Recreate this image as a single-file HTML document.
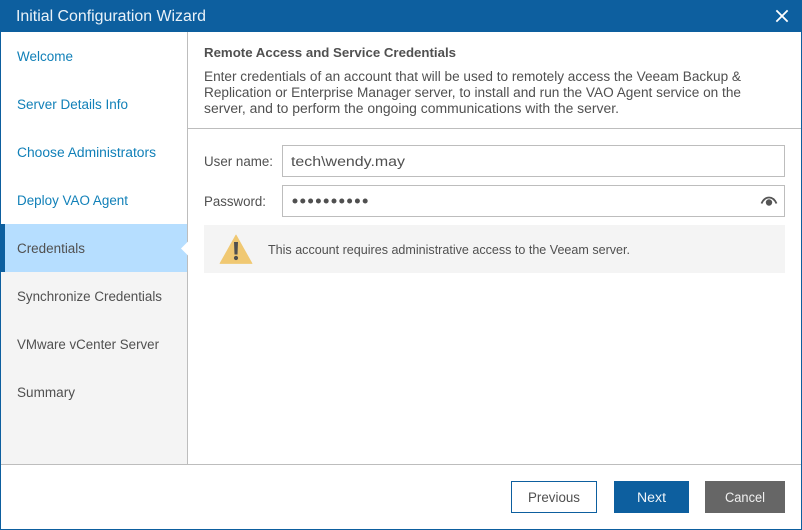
<!DOCTYPE html>
<html><head><meta charset="utf-8"><style>
html,body{margin:0;padding:0;background:#fff}
#p{position:relative;width:802px;height:530px;overflow:hidden;background:#fff;font-family:"Liberation Sans",sans-serif;font-size:13px;color:#505050}
#p div{position:absolute}
svg{position:absolute;left:0;top:0}
text{font-family:"Liberation Sans",sans-serif;font-size:13.5px;fill:#505050}
</style></head><body><div id="p">
<div style="left:0;top:0;width:800px;height:529px;border:1px solid #0d5f9f;border-top:0"></div>
<div style="left:0;top:0;width:802px;height:32px;background:#0d5f9f"></div>
<div style="left:1px;top:272px;width:186px;height:192px;background:#f4f4f4"></div>
<div style="left:1px;top:224px;width:186px;height:48px;background:#b6deff"></div>
<div style="left:1px;top:224px;width:4px;height:48px;background:#0d5f9f"></div>
<div style="left:187px;top:32px;width:1px;height:432px;background:#bdbdbd"></div>
<div style="left:188px;top:128px;width:613px;height:1px;background:#bdbdbd"></div>
<div style="left:1px;top:464px;width:800px;height:1px;background:#bdbdbd"></div>
<div style="left:282px;top:145px;width:501px;height:30px;border:1px solid #bdbdbd"></div>
<div style="left:282px;top:185px;width:501px;height:30px;border:1px solid #bdbdbd"></div>
<div style="left:204px;top:225px;width:581px;height:48px;background:#f4f4f4"></div>
<div style="left:511px;top:481px;width:84px;height:30px;border:1px solid #0d5f9f"></div>
<div style="left:614px;top:481px;width:75px;height:32px;background:#0d5f9f"></div>
<div style="left:705px;top:481px;width:80px;height:32px;background:#666"></div>
<svg width="802" height="530" viewBox="0 0 802 530">
<path d="M188 241.500L181 248.500L188 255.500Z" fill="#fff"/>
<path d="M777 11L787 21M787 11L777 21" stroke="#fff" stroke-width="1.800" stroke-linecap="square" fill="none"/>
<path d="M236 235L252 263.500H220Z" fill="#f0c872" stroke="#f0c872" stroke-width="0.800" stroke-linejoin="round"/>
<path d="M234 242H238L237.500 254.500H234.500Z" fill="#505050"/><circle cx="236" cy="258" r="2.100" fill="#505050"/>
<path d="M761.500 203.500C765 195.500 773 195.500 776.500 203.500" stroke="#555" stroke-width="1.800" fill="none"/>
<circle cx="769" cy="202.500" r="3.200" fill="#555"/>
<g fill="#505050"><circle cx="295" cy="201" r="2.500"/><circle cx="302.800" cy="201" r="2.500"/><circle cx="310.600" cy="201" r="2.500"/><circle cx="318.400" cy="201" r="2.500"/><circle cx="326.200" cy="201" r="2.500"/><circle cx="334" cy="201" r="2.500"/><circle cx="341.800" cy="201" r="2.500"/><circle cx="349.600" cy="201" r="2.500"/><circle cx="357.400" cy="201" r="2.500"/><circle cx="365.200" cy="201" r="2.500"/></g>
<text x="16" y="21" textLength="190" lengthAdjust="spacingAndGlyphs" style="font-size:15.500px;fill:#eaf2f8">Initial Configuration Wizard</text>
<text x="17" y="61" textLength="56" lengthAdjust="spacingAndGlyphs" style="fill:#1180b8">Welcome</text>
<text x="17" y="109" textLength="111" lengthAdjust="spacingAndGlyphs" style="fill:#1180b8">Server Details Info</text>
<text x="17" y="157" textLength="139" lengthAdjust="spacingAndGlyphs" style="fill:#1180b8">Choose Administrators</text>
<text x="17" y="205" textLength="111" lengthAdjust="spacingAndGlyphs" style="fill:#1180b8">Deploy VAO Agent</text>
<text x="17" y="253" textLength="68" lengthAdjust="spacingAndGlyphs">Credentials</text>
<text x="17" y="301" textLength="145" lengthAdjust="spacingAndGlyphs">Synchronize Credentials</text>
<text x="17" y="349" textLength="142" lengthAdjust="spacingAndGlyphs">VMware vCenter Server</text>
<text x="17" y="397" textLength="58" lengthAdjust="spacingAndGlyphs">Summary</text>
<text x="204" y="57" textLength="252" lengthAdjust="spacingAndGlyphs" style="font-weight:bold;font-size:13px">Remote Access and Service Credentials</text>
<text x="204" y="81" textLength="537" lengthAdjust="spacingAndGlyphs">Enter credentials of an account that will be used to remotely access the Veeam Backup &amp;</text>
<text x="204" y="97" textLength="537" lengthAdjust="spacingAndGlyphs">Replication or Enterprise Manager server, to install and run the VAO Agent service on the</text>
<text x="204" y="113" textLength="415" lengthAdjust="spacingAndGlyphs">server, and to perform the ongoing communications with the server.</text>
<text x="204" y="166" textLength="69" lengthAdjust="spacingAndGlyphs">User name:</text>
<text x="204" y="206" textLength="62" lengthAdjust="spacingAndGlyphs">Password:</text>
<text x="291" y="166" textLength="114" lengthAdjust="spacingAndGlyphs">tech\wendy.may</text>
<text x="268" y="254" textLength="362" lengthAdjust="spacingAndGlyphs" style="font-size:12.500px">This account requires administrative access to the Veeam server.</text>
<text x="528" y="502" textLength="52" lengthAdjust="spacingAndGlyphs">Previous</text>
<text x="637" y="502" textLength="29" lengthAdjust="spacingAndGlyphs" style="fill:#eef4f9">Next</text>
<text x="725" y="502" textLength="40" lengthAdjust="spacingAndGlyphs" style="fill:#f0f0f0">Cancel</text>
</svg>
</div></body></html>
